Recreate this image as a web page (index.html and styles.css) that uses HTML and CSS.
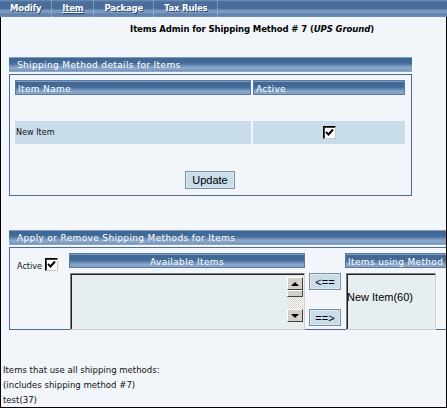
FILE: index.html
```html
<!DOCTYPE html>
<html lang="en">
<head>
  <meta charset="UTF-8" />
  <title>Items Admin for Shipping Method</title>
  <link rel="stylesheet" href="styles.css">
</head>
<body>

  <div class="tabs">
    <a class="tab">Modify</a>
    <a class="tab current">Item</a>
    <a class="tab">Package</a>
    <a class="tab">Tax Rules</a>
  </div>

  <div class="page">
    <div class="content">
      <h1 class="title">Items Admin for Shipping Method # 7 (<em>UPS Ground</em>)</h1>

      <div class="panel details">
        <div class="bar">Shipping Method details for Items</div>
        <div class="box">
          <div class="grid">
            <div class="bar cell">Item Name</div>
            <div class="bar cell">Active</div>
            <div class="row">New Item</div>
            <div class="row center">
              <span class="cb"><svg width="9" height="9" viewBox="0 0 9 9"><path d="M1 4 L3.5 6.5 L8 1.5" fill="none" stroke="#000" stroke-width="2"/></svg></span>
            </div>
          </div>
          <div class="actions"><button class="btn">Update</button></div>
        </div>
      </div>

      <div class="panel apply">
        <div class="bar">Apply or Remove Shipping Methods for Items</div>
        <div class="box flow">
          <div class="col-active">
            <span>Active</span>
            <span class="cb"><svg width="9" height="9" viewBox="0 0 9 9"><path d="M1 4 L3.5 6.5 L8 1.5" fill="none" stroke="#000" stroke-width="2"/></svg></span>
          </div>
          <div class="col-list">
            <div class="bar cell centered">Available Items</div>
            <div class="listbox available">
              <div class="list-body"></div>
              <div class="scrollbar">
                <div class="sb-btn"><span class="arrow up"></span></div>
                <div class="sb-thumb"></div>
                <div class="sb-track"></div>
                <div class="sb-btn"><span class="arrow down"></span></div>
              </div>
            </div>
          </div>
          <div class="col-move">
            <button class="btn small">&lt;==</button>
            <button class="btn small">==&gt;</button>
          </div>
          <div class="col-using">
            <div class="bar cell">Items using Method</div>
            <div class="listbox using">
              <div class="list-body">New Item(60)</div>
            </div>
          </div>
        </div>
      </div>
    </div>

    <div class="notes">
      <div>Items that use all shipping methods:</div>
      <div>(includes shipping method #7)</div>
      <div>test(37)</div>
    </div>
  </div>

</body>
</html>
```

FILE: styles.css
```css
body {
  margin: 0;
  font-family: "DejaVu Sans", sans-serif;
  font-size: 9px;
  color: #111;
  background: #f2f6fa;
  overflow: hidden;
}

.tabs {
  display: flex;
  height: 17px;
  background: linear-gradient(#7390b6 0, #4a6e9b 2px, #4a6e9b 9px, #7a99bf 10px, #7a99bf 13px, #5c7ea8 14px, #6f8fb6 17px);
}

.tab {
  padding: 0 10px;
  line-height: 16px;
  font-weight: bold;
  font-size: 8.5px;
  letter-spacing: -0.2px;
  color: #fff;
  text-shadow: 1px 1px 0 #2e4a6e;
  border-right: 1px dotted #a8bdd6;
}

.tab.current {
  text-decoration: underline;
}

.page {
  box-sizing: border-box;
  height: 391px;
  border: 1px solid #000;
  border-top: 0;
  background: #f2f6fa;
  overflow: hidden;
}

.content {
  width: 486px;
  padding-left: 8px;
}

.title {
  margin: 0 0 22px;
  padding-top: 6px;
  line-height: 12px;
  font-size: 8.5px;
  letter-spacing: -0.1px;
  font-weight: bold;
  text-align: center;
  color: #000;
}

.bar {
  height: 15px;
  line-height: 16px;
  padding-left: 8px;
  color: #fff;
  letter-spacing: 0.35px;
  white-space: nowrap;
  overflow: hidden;
  background: linear-gradient(#7f9cc1 0, #7f9cc1 1px, #3f6794 1px, #446b98 6px, #5e82ad 8px, #86a5c9 10px, #86a5c9 13px, #5d7ea8 14px);
  border-bottom: 1px dotted #9fb6d2;
  box-sizing: border-box;
}

.panel.details {
  width: 403px;
}

.panel.details + .panel {
  margin-top: 34px;
}

.box {
  margin-top: 2px;
  border: 1px solid #4a6d96;
}

.details .box {
  padding: 5px 6px 6px 5px;
}

.grid {
  display: grid;
  grid-template-columns: 236px 152px;
  column-gap: 2px;
  row-gap: 26px;
}

.bar.cell {
  padding-left: 2px;
  border: 1px solid #5b7aa0;
}

.bar.centered {
  text-align: center;
  padding-left: 0;
}

.row {
  height: 23px;
  line-height: 23px;
  padding-left: 1px;
  font-family: "DejaVu Sans Condensed", "DejaVu Sans", sans-serif;
  background: #c9dcea;
}

.row.center {
  display: flex;
  align-items: center;
  justify-content: center;
}

.cb {
  box-sizing: border-box;
  width: 13px;
  height: 13px;
  display: inline-flex;
  align-items: center;
  justify-content: center;
  background: #fff;
  border: 1px solid #000;
  border-right-color: #c8c8c8;
  border-bottom-color: #c8c8c8;
  box-shadow: inset 1px 1px 0 #404040;
}

.actions {
  margin-top: 27px;
  text-align: center;
}

.btn {
  height: 18px;
  padding: 0 6px;
  font-family: "Liberation Sans", sans-serif;
  font-size: 11px;
  color: #000;
  background: #c9dcea;
  border: 1px solid #80909e;
  box-shadow: inset 0 0 0 1px #dbe7f0;
}

.apply {
  width: 494px;
}

.box.flow {
  display: flex;
  padding: 5px 0 0 6px;
  height: 76px;
}

.col-active {
  width: 53px;
  padding-top: 7px;
  display: flex;
  align-items: flex-end;
  gap: 3px;
  height: 11px;
  font-family: "DejaVu Sans Condensed", "DejaVu Sans", sans-serif;
  padding-left: 1px;
}

.col-active span:first-child {
  line-height: 10px;
}

.col-list {
  width: 239px;
}

.listbox {
  box-sizing: border-box;
  margin-top: 5px;
  height: 57px;
  display: flex;
  background: #e6eef2;
  border: 1px solid #808080;
  border-right-color: #d4d0c8;
  border-bottom-color: #d4d0c8;
  box-shadow: inset 1px 1px 0 #222;
}

.available {
  margin-left: 1px;
  width: 235px;
}

.list-body {
  flex: 1;
}

.scrollbar {
  width: 16px;
  margin: 3px 1px 7px 0;
  display: flex;
  flex-direction: column;
}

.sb-btn {
  height: 13px;
  box-sizing: border-box;
  display: flex;
  align-items: center;
  justify-content: center;
  background: #d4d0c8;
  border: 1px solid #fff;
  border-right-color: #404040;
  border-bottom-color: #404040;
}

.sb-thumb {
  height: 7px;
  box-sizing: border-box;
  background: #d4d0c8;
  border: 1px solid #fff;
  border-right-color: #404040;
  border-bottom-color: #404040;
}

.sb-track {
  flex: 1;
  background: repeating-conic-gradient(#fff 0 25%, #d4d0c8 0 50%) 0 0 / 2px 2px;
}

.arrow {
  width: 0;
  height: 0;
  border-left: 4px solid transparent;
  border-right: 4px solid transparent;
}

.arrow.up {
  border-bottom: 4px solid #000;
}

.arrow.down {
  border-top: 4px solid #000;
}

.col-move {
  width: 32px;
  margin-left: 4px;
  padding-top: 20px;
  height: 53px;
  display: flex;
  flex-direction: column;
  justify-content: space-between;
}

.btn.small {
  width: 32px;
  height: 17px;
  padding: 0;
}

.col-using {
  margin-left: 4px;
  width: 160px;
}

.using {
  margin-left: 1px;
  width: 90px;
}

.using .list-body {
  display: flex;
  align-items: center;
  font-family: "Liberation Sans", sans-serif;
  font-size: 11px;
  color: #000;
  padding-bottom: 9px;
}

.notes {
  margin-top: 32px;
  padding-left: 2px;
  line-height: 15px;
  font-size: 9.5px;
  font-family: "DejaVu Sans Condensed", "DejaVu Sans", sans-serif;
}
```
